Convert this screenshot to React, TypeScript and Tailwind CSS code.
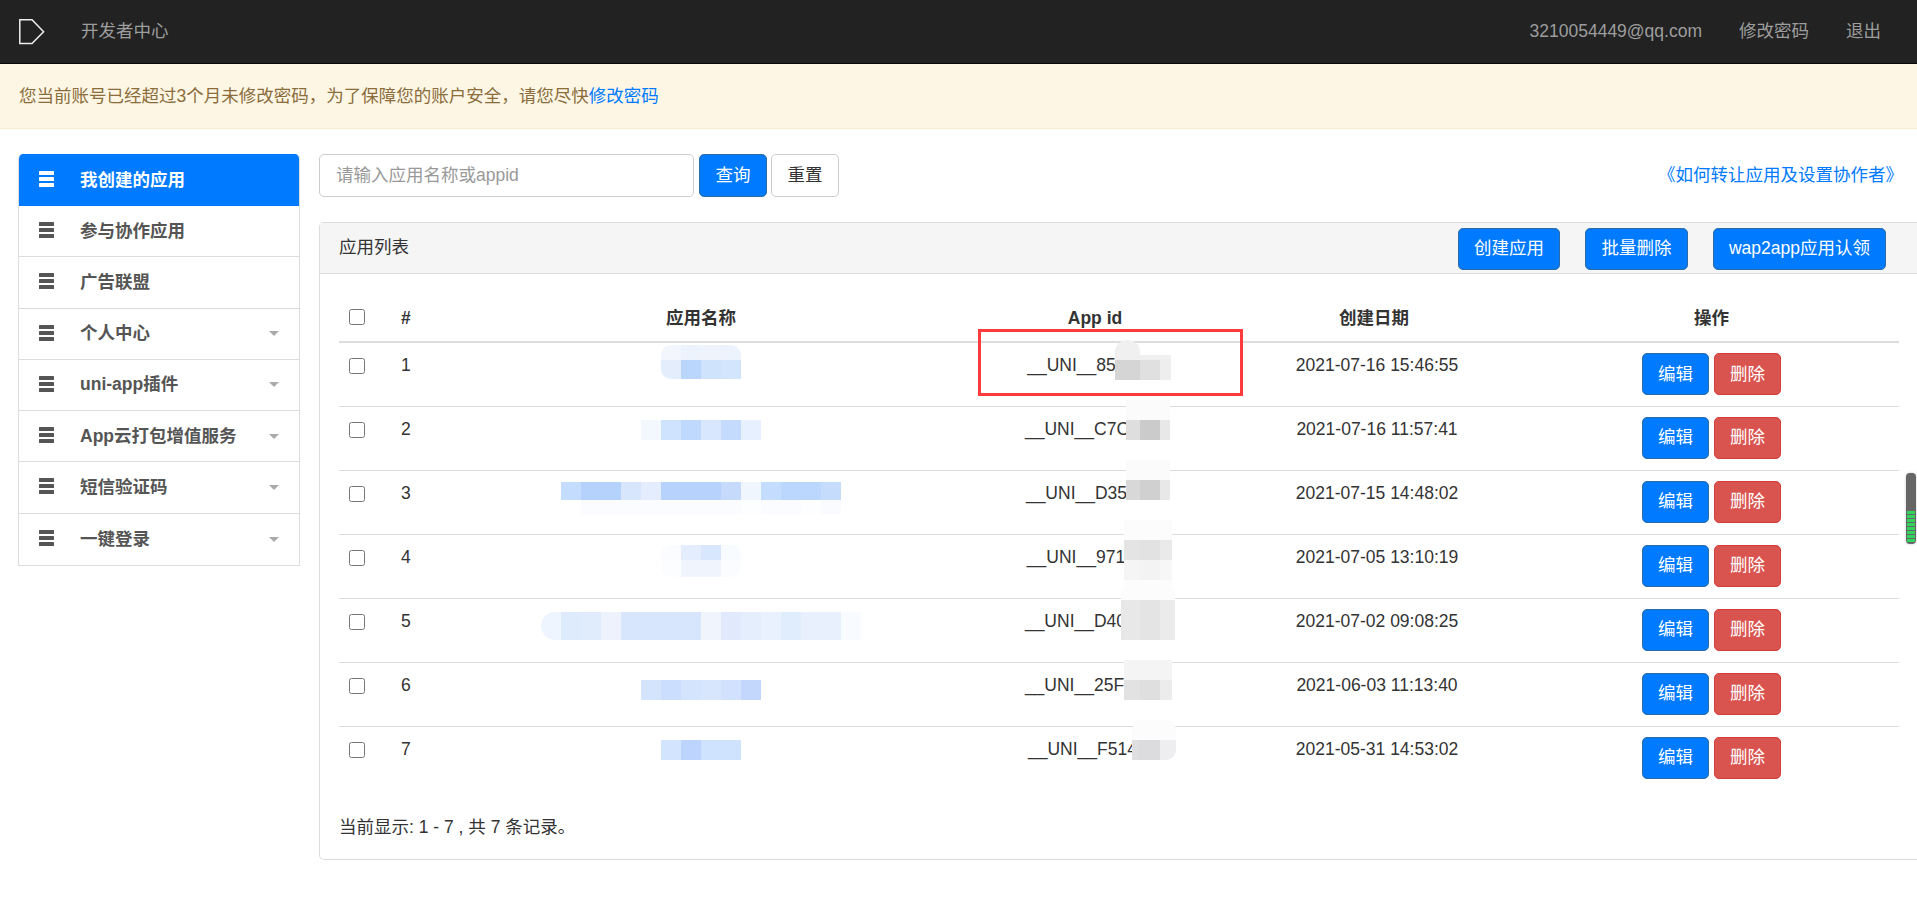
import React from "react";

const navRight = ["3210054449@qq.com", "修改密码", "退出"];

const menu = [
  { label: "我创建的应用", active: true },
  { label: "参与协作应用" },
  { label: "广告联盟" },
  { label: "个人中心", caret: true },
  { label: "uni-app插件", caret: true },
  { label: "App云打包增值服务", caret: true },
  { label: "短信验证码", caret: true },
  { label: "一键登录", caret: true },
];

type Band = { h: string; cells: string[] };

// 打码区域：每行是一条色块带
const rows: {
  no: number;
  id: string;
  spacer: string;
  date: string;
  nameTop: string;
  nameShape?: string;
  name: Band[];
  maskPos: string;
  mask: Band[];
}[] = [
  {
    no: 1,
    id: "__UNI__85",
    spacer: "w-[47px]",
    date: "2021-07-16 15:46:55",
    nameTop: "mt-[2px]",
    nameShape: "rounded-l-[10px] rounded-tr-[10px]",
    name: [
      { h: "h-[15px]", cells: ["bg-[#f3f7fd]", "bg-[#edf3fc]", "bg-[#eff4fc]", "bg-[#edf3fc]"] },
      { h: "h-[19px]", cells: ["bg-[#e3edfc]", "bg-[#bad6fd]", "bg-[#d0e3fd]", "bg-[#d3e4fd]"] },
    ],
    maskPos: "left-[149px] top-[-3px]",
    mask: [
      { h: "h-[15px]", cells: ["w-[25px] rounded-t-[12px] bg-[#f0f0f0]"] },
      { h: "h-[5px]", cells: ["w-[56px] bg-[#f0f0f0]"] },
      { h: "h-[20px]", cells: ["w-[25px] bg-[#d5d5d5]", "w-[20px] bg-[#e0e0e0]", "w-[11px] bg-[#eeeeee]"] },
    ],
  },
  {
    no: 2,
    id: "__UNI__C7C",
    spacer: "w-[36px]",
    date: "2021-07-16 11:57:41",
    nameTop: "mt-[13px]",
    name: [
      {
        h: "h-[20px]",
        cells: ["bg-[#f3f8ff]", "bg-[#cfe2fe]", "bg-[#bfd8fd]", "bg-[#d8e6fe]", "bg-[#c4dbfd]", "bg-[#e6f0fe]"],
      },
    ],
    maskPos: "left-[160px] top-[-7px]",
    mask: [
      { h: "h-[20px]", cells: ["w-[44px] bg-[#fbfbfb]"] },
      { h: "h-[20px]", cells: ["w-[14px] bg-[#dedede]", "w-[20px] bg-[#cbcbcb]", "w-[10px] bg-[#e8e8e8]"] },
    ],
  },
  {
    no: 3,
    id: "__UNI__D35",
    spacer: "w-[37px]",
    date: "2021-07-15 14:48:02",
    nameTop: "mt-[11px]",
    name: [
      {
        h: "h-[18px]",
        cells: [
          "bg-[#c4dcfe]",
          "bg-[#b5d2fd]",
          "bg-[#b5d2fd]",
          "bg-[#d8e6fd]",
          "bg-[#e4edfd]",
          "bg-[#b7d3fd]",
          "bg-[#b7d3fd]",
          "bg-[#b7d3fd]",
          "bg-[#c6dafb]",
          "bg-[#f0f6fe]",
          "bg-[#c4dcfd]",
          "bg-[#bcd7fe]",
          "bg-[#bcd7fe]",
          "bg-[#c6dcfd]",
        ],
      },
      {
        h: "h-[14px]",
        cells: [
          "bg-white",
          "bg-[#fafcff]",
          "bg-[#fafcff]",
          "bg-[#fafcff]",
          "bg-[#fafcff]",
          "bg-[#fafcff]",
          "bg-[#fafcff]",
          "bg-[#fafcff]",
          "bg-[#fafcff]",
          "bg-[#fdfeff]",
          "bg-[#fafcff]",
          "bg-[#fafcff]",
          "bg-[#fdfeff]",
          "bg-[#f9fbff]",
        ],
      },
    ],
    maskPos: "left-[160px] top-[-11px]",
    mask: [
      { h: "h-[20px]", cells: ["w-[44px] bg-[#fbfbfb]"] },
      { h: "h-[20px]", cells: ["w-[14px] bg-[#d8d8d8]", "w-[20px] bg-[#d0d0d0]", "w-[10px] bg-[#e8e8e8]"] },
    ],
  },
  {
    no: 4,
    id: "__UNI__971",
    spacer: "w-[38px]",
    date: "2021-07-05 13:10:19",
    nameTop: "mt-[10px]",
    nameShape: "rounded-[10px]",
    name: [
      { h: "h-[15px]", cells: ["bg-[#fafcff]", "bg-[#e3edfd]", "bg-[#d8e6fe]", "bg-[#f8fbff]"] },
      { h: "h-[17px]", cells: ["bg-[#fcfdff]", "bg-[#f0f5fd]", "bg-[#f0f5fd]", "bg-[#fafcff]"] },
    ],
    maskPos: "left-[158px] top-[-15px]",
    mask: [
      { h: "h-[20px]", cells: ["w-[48px] bg-[#fcfcfc]"] },
      { h: "h-[20px]", cells: ["w-[16px] bg-[#e4e4e4]", "w-[20px] bg-[#e2e2e2]", "w-[12px] bg-[#eaeaea]"] },
      { h: "h-[20px]", cells: ["w-[16px] bg-[#f5f5f5]", "w-[20px] bg-[#f3f3f3]", "w-[12px] bg-[#f7f7f7]"] },
      { h: "h-[20px]", cells: ["w-[48px] bg-[#fcfcfc]"] },
    ],
  },
  {
    no: 5,
    id: "__UNI__D40",
    spacer: "w-[39px]",
    date: "2021-07-02 09:08:25",
    nameTop: "mt-[13px]",
    nameShape: "rounded-l-[14px]",
    name: [
      {
        h: "h-[28px]",
        cells: [
          "bg-[#eef5fe]",
          "bg-[#deebfd]",
          "bg-[#e0ebfc]",
          "bg-[#edf2fc]",
          "bg-[#d8e6fd]",
          "bg-[#d8e6fd]",
          "bg-[#d8e6fd]",
          "bg-[#d8e6fd]",
          "bg-[#f0f5fd]",
          "bg-[#e0eafc]",
          "bg-[#e4eefd]",
          "bg-[#eaf1fe]",
          "bg-[#e0edfd]",
          "bg-[#e8f0fd]",
          "bg-[#e8f0fd]",
          "bg-[#f8fbff]",
        ],
      },
    ],
    maskPos: "left-[155px] top-[-9px]",
    mask: [
      { h: "h-[10px]", cells: ["w-[54px] bg-[#fcfcfc]"] },
      { h: "h-[40px]", cells: ["w-[19px] bg-[#e8e8e8]", "w-[20px] bg-[#e4e4e4]", "w-[15px] bg-[#ebebeb]"] },
    ],
  },
  {
    no: 6,
    id: "__UNI__25F",
    spacer: "w-[41px]",
    date: "2021-06-03 11:13:40",
    nameTop: "mt-[17px]",
    name: [
      {
        h: "h-[20px]",
        cells: ["bg-[#d5e4fd]", "bg-[#cbdefd]", "bg-[#d5e4fd]", "bg-[#d8e6fd]", "bg-[#d2e2fe]", "bg-[#c3d7fc]"],
      },
    ],
    maskPos: "left-[158px] top-[-3px]",
    mask: [
      { h: "h-[20px]", cells: ["w-[48px] bg-[#f4f4f4]"] },
      { h: "h-[20px]", cells: ["w-[16px] bg-[#e2e2e2]", "w-[20px] bg-[#dfdfdf]", "w-[12px] bg-[#ececec]"] },
    ],
  },
  {
    no: 7,
    id: "__UNI__F514",
    spacer: "w-[25px]",
    date: "2021-05-31 14:53:02",
    nameTop: "mt-[13px]",
    name: [{ h: "h-[20px]", cells: ["bg-[#d2e4fe]", "bg-[#bcd4fe]", "bg-[#cfe2fe]", "bg-[#cfe2fe]"] }],
    maskPos: "left-[166px] top-[-7px]",
    mask: [
      { h: "h-[20px]", cells: ["w-[44px] rounded-t-[10px] bg-[#fcfcfc]"] },
      { h: "h-[20px]", cells: ["w-[7px] bg-[#dfdfe1]", "w-[21px] bg-[#dcdcdf]", "w-[16px] rounded-br-[10px] bg-[#eeeef0]"] },
    ],
  },
];

const BarsIcon = ({ className }: { className: string }) => (
  <svg viewBox="0 0 15 16" className={`h-4 w-[15px] ${className}`} fill="currentColor">
    <rect x="0" y="0" width="15" height="4" rx="0.5" />
    <rect x="0" y="6" width="15" height="4" rx="0.5" />
    <rect x="0" y="12" width="15" height="4" rx="0.5" />
  </svg>
);

const BlueButton = ({ children, className = "" }: { children: React.ReactNode; className?: string }) => (
  <button
    className={`h-[42px] rounded-[5px] border border-[#2e6da4] bg-[#007aff] px-[15px] text-white ${className}`}
  >
    {children}
  </button>
);

const Mosaic = ({ bands, className = "" }: { bands: Band[]; className?: string }) => (
  <div className={`mx-auto w-fit overflow-hidden ${className}`}>
    {bands.map((band, i) => (
      <div key={i} className={`flex ${band.h}`}>
        {band.cells.map((c, j) => (
          <div key={j} className={`w-5 ${c}`} />
        ))}
      </div>
    ))}
  </div>
);

const App = () => {
  return (
    <div className="relative min-h-[897px] overflow-hidden bg-white font-['Liberation_Sans','Noto_Sans_CJK_SC',sans-serif] text-[17.5px] leading-[25px] text-[#333]">
      <header className="flex h-[64px] items-center border-b border-[#080808] bg-[#222] pr-[36px] pl-[19px] text-[#9d9d9d]">
        <svg viewBox="0 0 26 26" className="h-[26px] w-[26px]" fill="none" stroke="#eeeeee" strokeWidth="1.5">
          <path d="M0.8 0.8H13L24.6 12.8L13 24.6H0.8Z" />
        </svg>
        <span className="ml-[36px]">开发者中心</span>
        <nav className="ml-auto flex gap-[37px]">
          {navRight.map(item => (
            <span key={item}>{item}</span>
          ))}
        </nav>
      </header>

      <div className="flex h-[65px] items-center border-b border-[#faebcc] bg-[#fef6e4] pl-[19px] text-[#8a6d3b]">
        您当前账号已经超过3个月未修改密码，为了保障您的账户安全，请您尽快
        <a className="text-[#007aff]">修改密码</a>
      </div>

      <div className="flex gap-[19px] pt-[25px] pl-[18px]">
        <aside className="w-[282px] shrink-0">
          <ul className="overflow-hidden rounded-t-[5px] border-x border-b border-[#ddd] font-bold text-[#555]">
            {menu.map(item => (
              <li
                key={item.label}
                className={
                  item.active
                    ? "relative mx-[-1px] flex h-[52px] items-center bg-[#007aff] pl-[21px] text-white"
                    : "flex h-[51.25px] items-center border-b border-[#ddd] pl-[20px] last:border-b-0"
                }
              >
                <BarsIcon className="mb-[2px]" />
                <span className="ml-[26px]">{item.label}</span>
                {item.caret && (
                  <span className="mr-[20px] ml-auto h-0 w-0 border-x-[5px] border-t-[5px] border-x-transparent border-t-[#aaa]" />
                )}
              </li>
            ))}
          </ul>
        </aside>

        <main className="min-w-0 flex-1">
          <div className="flex items-center">
            <input
              placeholder="请输入应用名称或appid"
              className="h-[43px] w-[375px] rounded-[5px] border border-[#ccc] px-[16px] placeholder:text-[#999]"
            />
            <button className="ml-[5px] h-[43px] w-[68px] rounded-[5px] border border-[#2e6da4] bg-[#007aff] text-white">
              查询
            </button>
            <button className="ml-[4px] h-[43px] w-[68px] rounded-[5px] border border-[#ccc] bg-white">重置</button>
            <a className="mr-[14px] ml-auto text-[#007aff]">《如何转让应用及设置协作者》</a>
          </div>

          <section className="mt-[25px] h-[638px] rounded-l-[5px] border-y border-l border-[#ddd]">
            <div className="flex h-[51px] items-center border-b border-[#ddd] bg-[#f5f5f5] pr-[31px] pl-[19px]">
              <span className="mb-[2px]">应用列表</span>
              <div className="mt-[1px] ml-auto flex gap-[25px]">
                <BlueButton>创建应用</BlueButton>
                <BlueButton className="w-[103px]">批量删除</BlueButton>
                <BlueButton>wap2app应用认领</BlueButton>
              </div>
            </div>

            <div className="pt-[21px] pr-[18px] pl-[19px]">
              <table className="w-full table-fixed border-collapse">
                <colgroup>
                  <col className="w-[52px]" />
                  <col className="w-[45px]" />
                  <col className="w-[530px]" />
                  <col className="w-[258px]" />
                  <col className="w-[300px]" />
                  <col />
                </colgroup>
                <thead>
                  <tr className="h-[47px] border-b-2 border-[#ddd] font-bold">
                    <th className="p-0 pb-[3px] align-middle">
                      <input type="checkbox" className="ml-[10px] block h-4 w-4" />
                    </th>
                    <th className="px-[10px] text-left">#</th>
                    <th>应用名称</th>
                    <th>App id</th>
                    <th>创建日期</th>
                    <th>操作</th>
                  </tr>
                </thead>
                <tbody>
                  {rows.map(row => (
                    <tr key={row.no} className="h-[64px] border-b border-[#ddd] last:border-b-0">
                      <td className="p-0 align-top">
                        <input type="checkbox" className="mt-[15px] ml-[10px] block h-4 w-4" />
                      </td>
                      <td className="px-[10px] pt-[10px] align-top">{row.no}</td>
                      <td className="p-0 align-top">
                        <Mosaic bands={row.name} className={`${row.nameTop} ${row.nameShape ?? ""}`} />
                      </td>
                      <td className="relative pt-[10px] text-center align-top">
                        {row.id}
                        <span className={`inline-block ${row.spacer}`} />
                        <div className={`absolute ${row.maskPos}`}>
                          {row.mask.map((band, i) => (
                            <div key={i} className={`flex ${band.h}`}>
                              {band.cells.map((c, j) => (
                                <div key={j} className={c} />
                              ))}
                            </div>
                          ))}
                        </div>
                        {row.no === 1 && (
                          <div className="absolute top-[-14px] left-[12px] h-[67px] w-[265px] border-[3px] border-[#ff3b3b]" />
                        )}
                      </td>
                      <td className="pt-[10px] pl-[6px] text-center align-top">{row.date}</td>
                      <td className="pt-[10px] align-top">
                        <div className="flex justify-center gap-[5px]">
                          <BlueButton>编辑</BlueButton>
                          <button className="h-[42px] rounded-[5px] border border-[#d43f3a] bg-[#d9534f] px-[15px] text-white">
                            删除
                          </button>
                        </div>
                      </td>
                    </tr>
                  ))}
                </tbody>
              </table>
              <p className="mt-[25px]">当前显示: 1 - 7 , 共 7 条记录。</p>
            </div>
          </section>
        </main>
      </div>

      {/* 右侧悬浮的小挂件 */}
      <div className="absolute top-[473px] right-[1px] flex h-[71px] w-[10px] flex-col justify-end gap-px rounded-[4px] bg-[#666] p-px pb-[2px] shadow-[0_0_3px_rgba(0,0,0,0.2)]">
        {[0, 1, 2, 3, 4, 5, 6, 7].map(i => (
          <div key={i} className="h-[3px] bg-[#33d35f]" />
        ))}
      </div>
    </div>
  );
};

export default App;
